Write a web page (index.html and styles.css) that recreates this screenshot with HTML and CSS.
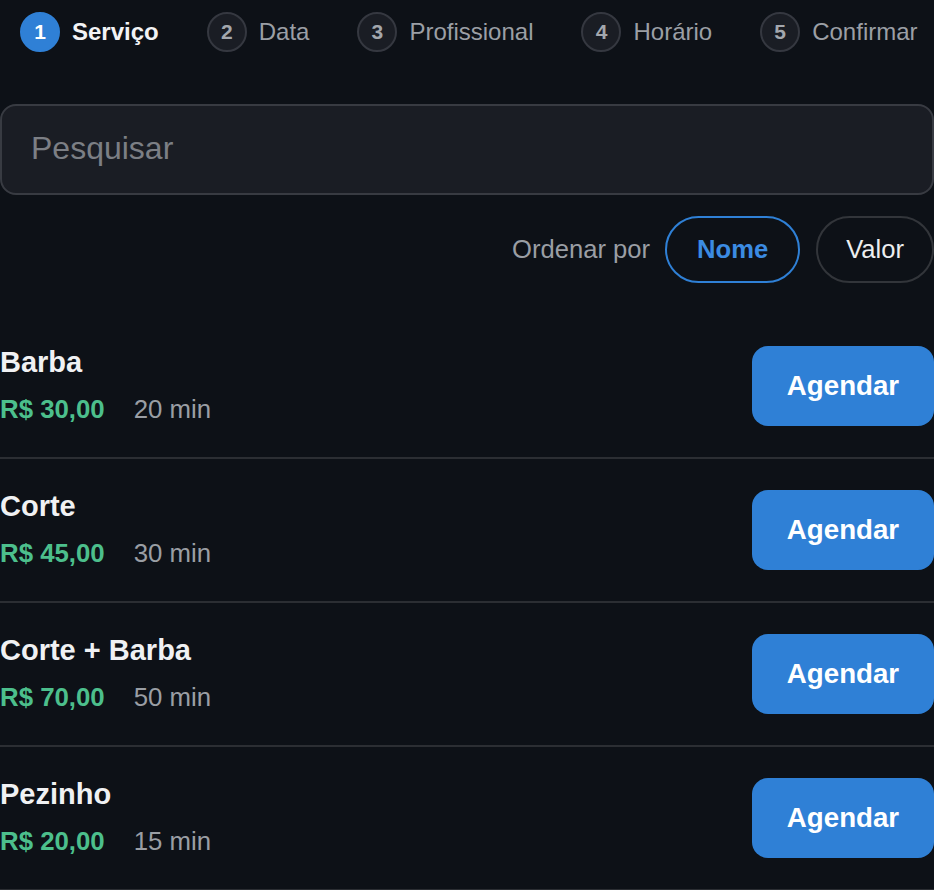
FILE: index.html
```html
<!DOCTYPE html>
<html lang="pt-BR">
<head>
<meta charset="utf-8">
<title>Agendamento</title>
<link rel="stylesheet" href="styles.css">
</head>
<body>
<div class="page">
  <nav class="stepper">
    <div class="step active"><span class="num">1</span><span class="label">Serviço</span></div>
    <div class="step"><span class="num">2</span><span class="label">Data</span></div>
    <div class="step"><span class="num">3</span><span class="label">Profissional</span></div>
    <div class="step"><span class="num">4</span><span class="label">Horário</span></div>
    <div class="step"><span class="num">5</span><span class="label">Confirmar</span></div>
  </nav>

  <input class="search" type="text" placeholder="Pesquisar">

  <div class="sort">
    <span class="sort-label">Ordenar por</span>
    <button class="chip selected">Nome</button>
    <button class="chip">Valor</button>
  </div>

  <ul class="services">
    <li class="service">
      <div class="info">
        <div class="name">Barba</div>
        <div class="meta"><span class="price">R$ 30,00</span><span class="dur">20 min</span></div>
      </div>
      <button class="book">Agendar</button>
    </li>
    <li class="service">
      <div class="info">
        <div class="name">Corte</div>
        <div class="meta"><span class="price">R$ 45,00</span><span class="dur">30 min</span></div>
      </div>
      <button class="book">Agendar</button>
    </li>
    <li class="service">
      <div class="info">
        <div class="name">Corte + Barba</div>
        <div class="meta"><span class="price">R$ 70,00</span><span class="dur">50 min</span></div>
      </div>
      <button class="book">Agendar</button>
    </li>
    <li class="service">
      <div class="info">
        <div class="name">Pezinho</div>
        <div class="meta"><span class="price">R$ 20,00</span><span class="dur">15 min</span></div>
      </div>
      <button class="book">Agendar</button>
    </li>
  </ul>
</div>
</body>
</html>
```

FILE: styles.css
```css
html, body {
  margin: 0;
  padding: 0;
  background: #0d1117;
}
body {
  font-family: "Liberation Sans", Arial, sans-serif;
  color: #eef0f2;
}
.page {
  display: flex;
  flex-direction: column;
}
.stepper {
  display: flex;
  align-items: center;
  gap: 48px;
  padding: 12px 20px 0;
}
.step {
  display: flex;
  align-items: center;
  gap: 12px;
}
.num {
  width: 36px;
  height: 36px;
  border-radius: 50%;
  border: 2px solid #353840;
  background: #1a1d24;
  color: #a3a7ad;
  font-weight: bold;
  font-size: 21px;
  display: flex;
  align-items: center;
  justify-content: center;
}
.label {
  font-size: 24px;
  color: #9b9fa5;
}
.step.active .num {
  background: #2f80d6;
  border-color: #2f80d6;
  color: #ffffff;
}
.step.active .label {
  color: #f2f3f5;
  font-weight: bold;
}
.search {
  margin: 52px 0 0;
  box-sizing: border-box;
  height: 91px;
  width: 100%;
  border: 2px solid #383b42;
  border-radius: 16px;
  background: #1a1d24;
  padding: 0 29px 3px;
  font-family: "Liberation Sans", Arial, sans-serif;
  font-size: 32px;
  color: #e0e0e0;
  outline: none;
}
.search::placeholder {
  color: #7c7f85;
}
.sort {
  margin-top: 21px;
  display: flex;
  justify-content: flex-end;
  align-items: center;
  gap: 16px;
}
.sort-label {
  font-size: 25.6px;
  color: #9a9ea4;
  margin-right: -1px;
}
.chip {
  box-sizing: border-box;
  height: 67px;
  padding: 0 28px;
  border-radius: 34px;
  border: 2px solid #32353a;
  background: transparent;
  color: #eceef0;
  font-family: "Liberation Sans", Arial, sans-serif;
  font-size: 25.6px;
}
.chip.selected {
  padding: 0 30px;
  border-color: #2f80d6;
  color: #3b8be2;
  font-weight: bold;
}
.services {
  list-style: none;
  margin: 32px 0 0;
  padding: 0;
}
.service {
  display: flex;
  justify-content: space-between;
  align-items: center;
  padding: 31px 0;
  border-bottom: 2px solid #2b2e33;
}
.info {
  display: flex;
  flex-direction: column;
  gap: 15px;
}
.name {
  font-size: 29px;
  font-weight: bold;
  color: #f0f1f3;
  line-height: 33px;
  margin-top: -2px;
}
.meta {
  display: flex;
  gap: 29px;
  font-size: 25.8px;
  line-height: 30px;
}
.price {
  color: #4cbf8c;
  font-weight: bold;
}
.dur {
  color: #9a9ea4;
}
.book {
  width: 182px;
  height: 80px;
  border: none;
  border-radius: 16px;
  background: #2f80d6;
  color: #ffffff;
  font-family: "Liberation Sans", Arial, sans-serif;
  font-size: 27.7px;
  font-weight: bold;
}
```
